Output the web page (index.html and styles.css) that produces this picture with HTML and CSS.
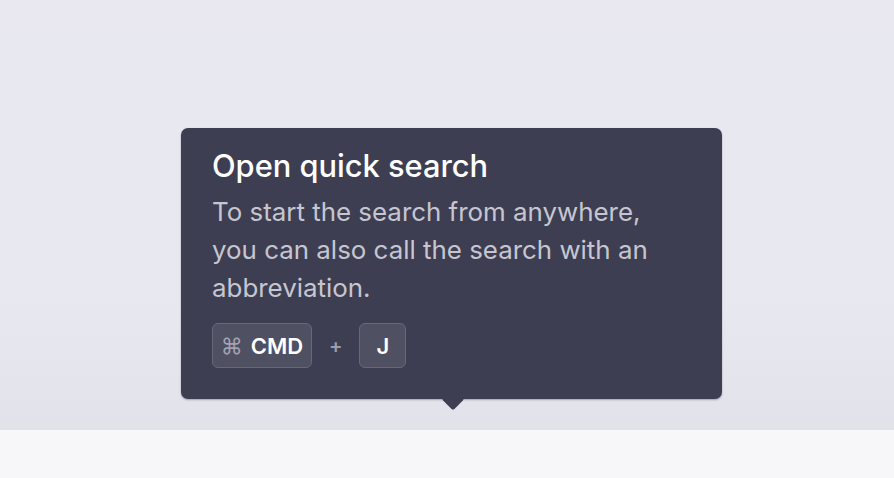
FILE: index.html
```html
<!DOCTYPE html>
<html lang="en">
<head>
<meta charset="utf-8">
<link rel="stylesheet" href="styles.css">
</head>
<body>
<div class="stage">
  <div class="tooltip">
    <h2 class="title">Open quick search</h2>
    <p class="desc">To start the search from anywhere,<br>you can also call the search with an<br>abbreviation.</p>
    <div class="keys">
      <span class="key"><span class="sym">⌘</span>CMD</span>
      <span class="plus">+</span>
      <span class="key key-j">J</span>
    </div>
    <span class="arrow"></span>
  </div>
</div>
<div class="footer"></div>
</body>
</html>
```

FILE: styles.css
```css
html, body {
  margin: 0;
  padding: 0;
}
body {
  width: 894px;
  height: 478px;
  overflow: hidden;
  font-family: Inter, "Noto Sans", sans-serif;
  background: #f7f7f9;
}
.stage {
  height: 430px;
  background: linear-gradient(#e9e8f1 0%, #e8e8f0 70%, #e2e2ea 100%);
  padding-top: 128px;
  padding-left: 181px;
  box-sizing: border-box;
}
.tooltip {
  position: relative;
  width: 541px;
  height: 271px;
  box-sizing: border-box;
  background: #3e3e52;
  border-radius: 7px;
  padding: 19px 31px 0;
  box-shadow: 0 1px 2px rgba(40, 40, 60, 0.35);
}
.title {
  margin: 0;
  font-size: 30.8px;
  font-weight: 500;
  color: #ffffff;
  line-height: 38px;
}
.desc {
  margin: 8px 0 0;
  font-size: 25.9px;
  line-height: 38px;
  color: #c6c6d1;
}
.keys {
  display: flex;
  align-items: center;
  margin-top: 16px;
}
.key {
  height: 45px;
  box-sizing: border-box;
  display: inline-flex;
  align-items: center;
  justify-content: center;
  background: #505063;
  border: 1px solid #68687b;
  border-radius: 6px;
  color: #ffffff;
  font-size: 22px;
  font-weight: 600;
  width: 100px;
}
.sym {
  color: #a2a2b2;
  font-weight: 400;
  font-size: 22px;
  margin-right: 8px;
}
.key-j {
  width: 47px;
}
.plus {
  color: #9c9cab;
  font-size: 20px;
  font-weight: 600;
  margin: 0 17px 0 17px;
}
.arrow {
  position: absolute;
  left: 264px;
  bottom: -8px;
  width: 16px;
  height: 16px;
  background: #3e3e52;
  transform: rotate(45deg);
  border-radius: 2px;
}
.footer {
  height: 48px;
  background: #f7f7f9;
}
```
